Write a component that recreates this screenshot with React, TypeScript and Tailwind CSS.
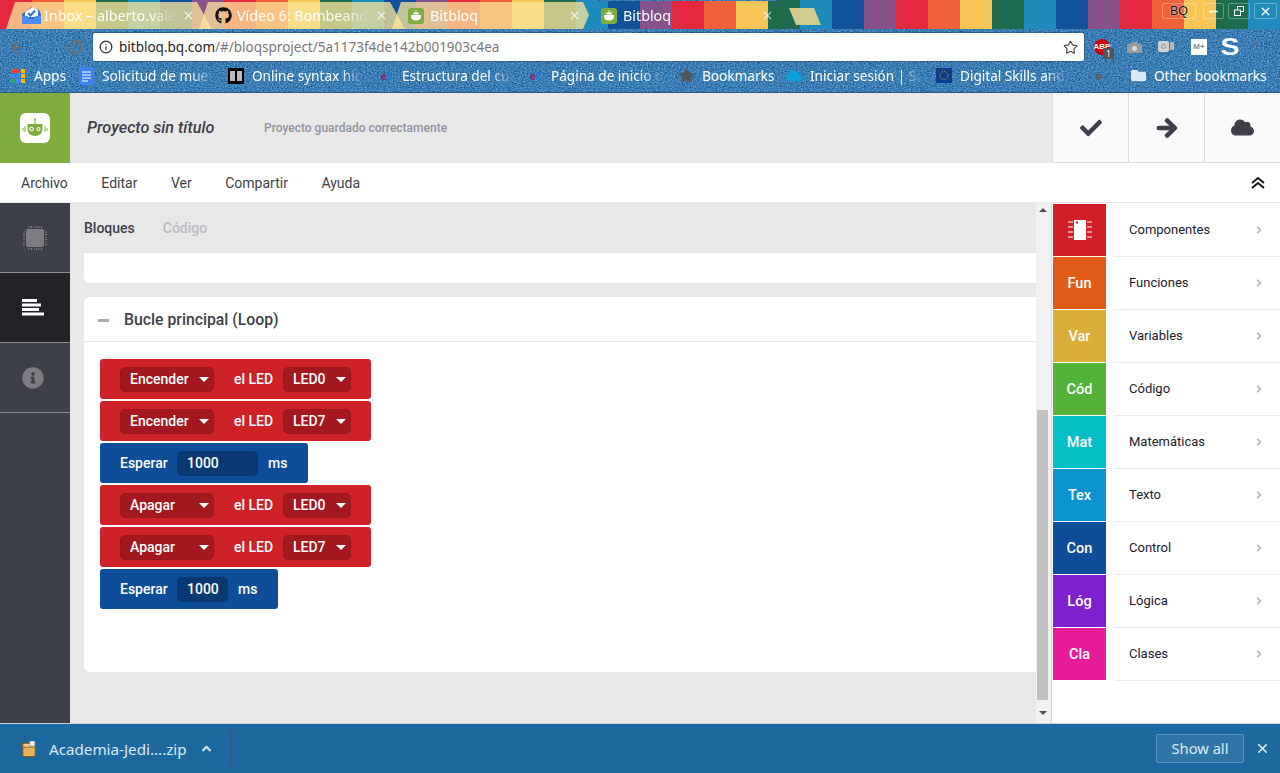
import React from "react";
import { FaCheck, FaArrowRight, FaCloud, FaInfoCircle, FaStar, FaAngleRight, FaGithub, FaAngleUp, FaFolder } from "react-icons/fa";
import { ArrowLeft, ArrowRight, RotateCw, Info, Star, X, Minus } from "lucide-react";

const stripeColors = ["bg-[#e4283f]", "bg-[#f0603a]", "bg-[#f5c656]", "bg-[#1e6b50]", "bg-[#1f8bbd]", "bg-[#11539b]", "bg-[#87518b]"];

function Denim({ id }: { id: string }) {
  return (
    <svg className="absolute inset-0 w-full h-full" aria-hidden="true">
      <filter id={id} x="0" y="0" width="100%" height="100%" colorInterpolationFilters="sRGB">
        <feTurbulence type="fractalNoise" baseFrequency="0.62 0.8" numOctaves={2} seed={4} />
        <feColorMatrix values="0.5 0 0 0 -0.02  0.5 0 0 0 0.24  0.5 0 0 0 0.45  0 0 0 0 1" />
      </filter>
      <rect width="100%" height="100%" filter={`url(#${id})`} />
    </svg>
  );
}

function TabIconBitbloq() {
  return (
    <svg width="16" height="16" viewBox="0 0 16 16" className="shrink-0">
      <rect width="16" height="16" rx="3" fill="#7fac3f" />
      <path d="M3 7h10v1.5c0 2.5-2 4-5 4s-5-1.500-5-4z" fill="#fff" />
      <rect x="5" y="4.500" width="6" height="2" rx="1" fill="#fff" />
      <rect x="7.500" y="2.500" width="1" height="2" fill="#fff" />
    </svg>
  );
}

function InboxIcon() {
  return (
    <svg width="19" height="17" viewBox="0 0 19 17" className="shrink-0">
      <path d="M0 7 L10 0 L17 3 L19 7 V17 H0z" fill="#2f72d6" />
      <path d="M3 5 L11 0 L16 3 V10 H3z" fill="#fff" />
      <path d="M6 6 L8.500 8.500 L13 3.500" stroke="#2f72d6" strokeWidth="2" fill="none" />
      <path d="M0 9 H5.500 L7 12 H12 L13.500 9 H19 V17 H0z" fill="#4a8df0" />
    </svg>
  );
}

function Tab({ label, icon, closeColor = "text-white/70", clip }: any) {
  return (
    <div className={`relative w-[206px] shrink-0 -mr-[13px] h-full ${clip}`}>
      <div className="relative h-full flex items-center pl-[16px] pr-[17px]">
        <span className="w-[19px] flex justify-start shrink-0">{icon}</span>
        <span className="ml-[3px] flex-1 overflow-hidden whitespace-nowrap text-[14.300px] text-white [mask-image:linear-gradient(to_right,#000_78%,transparent)]">{label}</span>
        <X size={13} strokeWidth={2.500} className={`ml-[4px] shrink-0 ${closeColor}`} />
      </div>
    </div>
  );
}

function BookmarkItem({ w, icon, label, fade = false }: { w: string; icon: React.ReactNode; label: string; fade?: boolean }) {
  return (
    <div className={`flex items-center shrink-0 ${w} ${fade ? "pr-[15px]" : ""}`}>
      <span className="w-[16px] flex justify-center shrink-0">{icon}</span>
      <span className={`ml-[8px] overflow-hidden whitespace-nowrap flex-1 ${fade ? "[mask-image:linear-gradient(to_right,#000_80%,transparent)]" : ""}`}>{label}</span>
    </div>
  );
}

function Ex() {
  return <span className="text-[10px] font-bold leading-none tracking-[-1px]"><span className="text-[#8c2a66]">e</span><span className="text-[#1f7fd0]">X</span></span>;
}

function Chrome() {
  const inactive = "[clip-path:polygon(0_100%,9px_0,191px_0,206px_100%)] bg-[#fce599]/75";
  return (
    <div className="relative h-[93px] bg-[#3d7eb3] overflow-hidden font-['Noto_Sans',sans-serif]">
      <Denim id="denim-a" />
      {/* tab strip */}
      <div className="relative h-[29px] [clip-path:polygon(0_0,597px_0,597px_1px,777px_1px,790px_29px,585px_29px,0_29px,0_0,777px_0,1280px_0,1280px_29px,790px_29px,777px_1px,777px_0)]">
        <div className="absolute inset-0 flex">
          {Array.from({ length: 40 }).map((_, i) => (
            <div key={i} className={`w-[32px] shrink-0 h-full ${stripeColors[i % 7]}`} />
          ))}
        </div>
      </div>
      <div className="absolute left-0 top-0 h-[29px] w-full">
        <div className="absolute left-[6px] top-[2px] h-[27px] flex">
          <Tab label="Inbox – alberto.valero" icon={<InboxIcon />} clip={inactive} />
          <Tab label="Vídeo 6: Bombeando" icon={<FaGithub size={17} className="text-[#111]" />} clip={inactive} />
          <Tab label="Bitbloq" icon={<TabIconBitbloq />} clip="[clip-path:polygon(0_100%,9px_0,191px_0,197px_48%,191px_100%)] bg-[#fce599]/75" />
          <Tab label="Bitbloq" icon={<TabIconBitbloq />} closeColor="text-white/60" clip="" />
        </div>
        <div className="absolute left-[789px] top-[8px] w-[32px] h-[17px] bg-[#d0cc8e] [clip-path:polygon(0_0,78%_0,100%_100%,22%_100%)]" />
      </div>
      {/* window controls */}
      <div className="absolute right-[3px] top-[3px] flex gap-[4px] text-white">
        <div className="w-[34px] h-[16px] mr-[3px] rounded-[2px] border border-white/30 flex items-center justify-center text-[12.500px] text-[#111] font-['Liberation_Sans',sans-serif] [text-shadow:0_0_2px_#fff]">BQ</div>
        <div className="w-[21px] h-[16px] rounded-[2px] border border-white/30 flex items-center justify-center"><Minus size={13} strokeWidth={2.500} /></div>
        <div className="w-[22px] h-[16px] rounded-[2px] border border-white/30 flex items-center justify-center">
          <svg width="10" height="10" viewBox="0 0 10 10" fill="none" stroke="#fff"><rect x="3.500" y="0.500" width="6" height="5" /><rect x="0.500" y="4" width="6" height="5.500" fill="#1a6a56" /></svg>
        </div>
        <div className="w-[23px] h-[16px] rounded-[2px] border border-white/30 flex items-center justify-center"><X size={13} strokeWidth={2.500} /></div>
      </div>
      {/* toolbar */}
      <div className="relative h-[33px] pt-[3px] flex items-center">
        <ArrowLeft size={17} strokeWidth={2.200} className="ml-[9px] text-[#6f6a66]" />
        <ArrowRight size={17} strokeWidth={2.200} className="ml-[11px] text-[#5f7f9e]/60" />
        <RotateCw size={16} strokeWidth={2.500} className="ml-[13px] text-[#6f6a66]" />
        <div className="ml-[10px] w-[991px] h-[28px] bg-white rounded-[2px] shadow-[0_0_0_1px_rgba(30,60,90,0.4)] flex items-center pl-[6px] pr-[6px]">
          <Info size={14} strokeWidth={2.200} className="text-[#333]" />
          <span className="ml-[6px] text-[13.500px] whitespace-nowrap text-[#222]">bitbloq.bq.com<span className="text-[#777]">/#/bloqsproject/5a1173f4de142b001903c4ea</span></span>
          <Star size={15} strokeWidth={1.800} className="ml-auto text-[#444]" />
        </div>
        <div className="ml-[9px] w-[18px] flex justify-center relative">
          <div className="w-[16px] h-[16px] rounded-full bg-[#c8000b] text-white text-[8px] font-bold flex items-center justify-center font-['Liberation_Sans',sans-serif]">ABP</div>
          <div className="absolute left-[10px] top-[9px] w-[11px] h-[11px] bg-[#555] text-white text-[8px] flex items-center justify-center rounded-[1px]">1</div>
        </div>
        <svg width="15" height="13" viewBox="0 0 15 13" className="ml-[16px]"><path d="M1 3h3l1-2h5l1 2h3a1 1 0 0 1 1 1v8H0V4a1 1 0 0 1 1-1z" fill="#9a9a9a" /><circle cx="7.500" cy="7.500" r="2.500" fill="#ddd" /></svg>
        <svg width="18" height="14" viewBox="0 0 18 14" className="ml-[15px]"><rect x="1" y="1" width="11" height="11" rx="2" fill="#cfcfcf" /><rect x="13" y="2" width="4" height="8" rx="1" fill="#b8b8b8" /><circle cx="6.500" cy="6.500" r="2" fill="none" stroke="#999" /></svg>
        <div className="ml-[16px] w-[16px] h-[16px] bg-white flex items-center justify-center text-[8px] font-bold text-[#888] font-['Liberation_Sans',sans-serif]">M+</div>
        <div className="ml-[15px] w-[16px] h-[16px] flex items-center justify-center text-[23px] leading-none font-black text-white font-['Liberation_Sans',sans-serif] scale-x-125">S</div>
        <div className="ml-[15px] flex flex-col gap-[2px]">
          <i className="block w-[2px] h-[2px] bg-[#6f6a66]" />
          <i className="block w-[2px] h-[2px] bg-[#6f6a66]" />
          <i className="block w-[2px] h-[2px] bg-[#6f6a66]" />
        </div>
      </div>
      {/* bookmarks */}
      <div className="relative h-[31px] pl-[10px] pb-[2px] flex items-center text-[13.600px] text-white border-b border-[#2b5a85]">
        <BookmarkItem w="w-[68px]" label="Apps" icon={
          <svg width="14" height="14" viewBox="0 0 14 14">
            {["#ea4335", "#ea4335", "#fbbc05", "#4285f4", "#4285f4", "#fbbc05", "#34a853", "#4285f4", "#fbbc05"].map((c, i) => (
              <rect key={i} x={(i % 3) * 5} y={Math.floor(i / 3) * 5} width="4" height="4" fill={c} />
            ))}
          </svg>
        } />
        <BookmarkItem w="w-[150px]" label="Solicitud de muestras" fade icon={
          <svg width="15" height="18" viewBox="0 0 15 18"><rect width="15" height="18" rx="1" fill="#3b82f0" /><path d="M3 5h9M3 8h9M3 11h9M3 14h6" stroke="#fff" /></svg>
        } />
        <BookmarkItem w="w-[150px]" label="Online syntax highlighting" fade icon={
          <svg width="16" height="16" viewBox="0 0 16 16"><rect width="16" height="16" fill="#000" /><rect x="2" y="3" width="5" height="10" fill="#bbb" /><rect x="9" y="3" width="5" height="10" fill="#bbb" /></svg>
        } />
        <BookmarkItem w="w-[149px]" label="Estructura del curso" fade icon={<Ex />} />
        <BookmarkItem w="w-[151px]" label="Página de inicio de" fade icon={<Ex />} />
        <BookmarkItem w="w-[108px]" label="Bookmarks" icon={<FaStar size={15} className="text-[#555]" />} />
        <BookmarkItem w="w-[150px]" label="Iniciar sesión | Salesforce" fade icon={<FaCloud size={17} className="text-[#0d9dda]" />} />
        <BookmarkItem w="w-[146px]" label="Digital Skills and Jobs" fade icon={
          <svg width="16" height="15" viewBox="0 0 16 15"><rect width="16" height="15" fill="#0f3e8c" /><circle cx="8" cy="7.500" r="4" fill="none" stroke="#c9b43a" strokeDasharray="1 1.300" /></svg>
        } />
        <span className="w-[48px] pl-[13px] text-[#6f5a50] font-bold text-[13px]">»</span>
        <BookmarkItem w="w-[140px]" label="Other bookmarks" icon={<FaFolder size={15} className="text-[#dbe9f5]" />} />
      </div>
    </div>
  );
}

function Logo() {
  return (
    <div className="w-[70px] h-full bg-[#7fac3f] flex items-center justify-center shrink-0">
      <div className="w-[30px] h-[30px] bg-white rounded-[6px] flex items-center justify-center">
        <svg width="26" height="20" viewBox="0 0 26 20">
          <rect x="12.500" y="1" width="1" height="5" fill="#7fac3f" />
          <circle cx="13" cy="1.500" r="1" fill="#7fac3f" />
          <path d="M5.500 6h15v5c0 4-3 7-7.500 7s-7.500-3-7.500-7z" fill="#7fac3f" />
          <circle cx="9.500" cy="11" r="2.300" fill="#fff" /><circle cx="9.500" cy="11" r="1.200" fill="#7fac3f" />
          <circle cx="16.500" cy="11" r="2" fill="#fff" /><circle cx="16.500" cy="11" r="1" fill="#7fac3f" />
          <path d="M1 10v3M3 8v6M23 8v6M25 10v3" stroke="#7fac3f" />
        </svg>
      </div>
    </div>
  );
}

function Header() {
  const btn = "w-[76px] h-full bg-[#fafafa] border-l border-[#dcdcdc] flex items-center justify-center text-[#3d4049]";
  return (
    <div className="h-[70px] flex bg-[#e8e8e8] font-['Roboto',sans-serif]">
      <Logo />
      <div className="flex-1 flex items-center pl-[17px]">
        <span className="text-[16.200px] italic font-medium text-[#3d4049] w-[177px] whitespace-nowrap">Proyecto sin título</span>
        <span className="text-[12px] font-medium text-[#92959f] whitespace-nowrap">Proyecto guardado correctamente</span>
      </div>
      <div className="flex border-b border-[#dcdcdc]">
        <div className={btn}><FaCheck size={22} /></div>
        <div className={btn}><FaArrowRight size={22} stroke="currentColor" strokeWidth={30} /></div>
        <div className={btn}><FaCloud size={23} /></div>
      </div>
    </div>
  );
}

function MenuBar() {
  return (
    <div className="h-[40px] pt-[1px] bg-white border-b border-[#e8e8e8] flex items-center pl-[21px] pr-[15px] gap-[33.500px] text-[14px] text-[#3d4049] font-['Roboto',sans-serif]">
      <span>Archivo</span>
      <span>Editar</span>
      <span>Ver</span>
      <span>Compartir</span>
      <span>Ayuda</span>
      <svg width="14" height="12" viewBox="0 0 14 12" fill="none" stroke="#111" strokeWidth="1.800" className="ml-auto">
        <path d="M1 6l6-5 6 5M1 11l6-5 6 5" />
      </svg>
    </div>
  );
}

function Sidebar() {
  return (
    <div className="w-[70px] shrink-0 bg-[#3d4049] flex flex-col">
      <div className="h-[70px] border-b border-[#8b8d92] flex items-center justify-center pr-[1px]">
        <svg width="24" height="24" viewBox="0 0 24 24">
          <rect x="3" y="3" width="18" height="18" rx="2" fill="#7b7d83" />
          <path d="M6 0v2M8.500 0v2M11 0v2M13.500 0v2M16 0v2M18.500 0v2M6 22v2M8.500 22v2M11 22v2M13.500 22v2M16 22v2M18.500 22v2M0 6h2M0 8.500h2M0 11h2M0 13.500h2M0 16h2M0 18.500h2M22 6h2M22 8.500h2M22 11h2M22 13.500h2M22 16h2M22 18.500h2" stroke="#7b7d83" />
        </svg>
      </div>
      <div className="h-[70px] bg-[#222326] border-b border-[#8b8d92] flex items-center justify-center pr-[4px]">
        <svg width="22" height="17" viewBox="0 0 22 17" fill="#fff">
          <rect width="15" height="3" />
          <rect y="4.500" width="19" height="3" />
          <rect y="9" width="17" height="3" />
          <rect y="13.500" width="22" height="3" />
        </svg>
      </div>
      <div className="h-[70px] border-b border-[#8b8d92] flex items-center justify-center pr-[4px]">
        <FaInfoCircle size={22} className="text-[#7b7d83]" />
      </div>
    </div>
  );
}

function Drop({ w, label }: { w: string; label: string }) {
  return (
    <div className={`${w} h-[25px] bg-[#a3171e] border border-[#9a171d] rounded-[5px] flex items-center pl-[9px] pr-[4px]`}>
      <span className="flex-1">{label}</span>
      <svg width="10" height="5" viewBox="0 0 10 5"><path d="M0 0h10L5 5z" fill="#fff" /></svg>
    </div>
  );
}

function LedBlock({ action, led }: { action: string; led: string }) {
  return (
    <div className="w-[271px] h-[40px] bg-[#cf2128] rounded-[3px] flex items-center pl-[20px]">
      <Drop w="w-[94px]" label={action} />
      <span className="ml-[20px] w-[49px]">el LED</span>
      <Drop w="w-[68px]" label={led} />
    </div>
  );
}

function WaitBlock({ outer, input }: { outer: string; input: string }) {
  return (
    <div className={`${outer} h-[40px] bg-[#0e4d98] rounded-[3px] flex items-center pl-[20px]`}>
      <span className="w-[57px]">Esperar</span>
      <div className={`${input} h-[25px] bg-[#0a3873] rounded-[5px] pl-[10px] flex items-center`}>1000</div>
      <span className="ml-[10px]">ms</span>
    </div>
  );
}

function Center() {
  return (
    <div className="flex-1 min-w-0 bg-[#e8e8e8] pl-[14px] flex flex-col font-['Roboto',sans-serif]">
      <div className="h-[50px] flex items-center gap-[28px] text-[14px] font-medium">
        <span className="text-[#3d4049]">Bloques</span>
        <span className="text-[#b9bcc1]">Código</span>
      </div>
      <div className="h-[30px] bg-white rounded-bl-[6px]" />
      <div className="mt-[14px] h-[375px] bg-white rounded-l-[6px] flex flex-col">
        <div className="h-[45px] pt-[2px] border-b border-[#e8e8e8] flex items-center pl-[14px] shrink-0">
          <span className="w-[11px] h-[3px] bg-[#a8adb5]" />
          <span className="ml-[15px] text-[15.800px] font-medium text-[#3d4049]">Bucle principal (Loop)</span>
        </div>
        <div className="pl-[16px] pt-[17px] flex flex-col gap-[2px] text-[14px] font-medium text-white">
          <LedBlock action="Encender" led="LED0" />
          <LedBlock action="Encender" led="LED7" />
          <WaitBlock outer="w-[208px]" input="w-[81px]" />
          <LedBlock action="Apagar" led="LED0" />
          <LedBlock action="Apagar" led="LED7" />
          <WaitBlock outer="w-[178px]" input="w-[51px]" />
        </div>
      </div>
    </div>
  );
}

function Scrollbar() {
  return (
    <div className="w-[16px] shrink-0 bg-[#f1f1f1] border-r border-[#d9d9d9] flex flex-col items-center pr-[3px] pl-[1px]">
      <svg width="8" height="4" viewBox="0 0 8 4" className="mt-[5px] shrink-0"><path d="M4 0l4 4H0z" fill="#505050" /></svg>
      <div className="w-[11px] h-[290px] bg-[#c1c1c1] mt-[198px] shrink-0" />
      <svg width="8" height="4" viewBox="0 0 8 4" className="mt-[11px] shrink-0"><path d="M4 4L8 0H0z" fill="#505050" /></svg>
    </div>
  );
}

const rows = [
  ["", "Componentes", "bg-[#d01f27]"],
  ["Fun", "Funciones", "bg-[#e05a18]"],
  ["Var", "Variables", "bg-[#dbae3a]"],
  ["Cód", "Código", "bg-[#54b23a]"],
  ["Mat", "Matemáticas", "bg-[#06c0c8]"],
  ["Tex", "Texto", "bg-[#0a93cf]"],
  ["Con", "Control", "bg-[#0e4d98]"],
  ["Lóg", "Lógica", "bg-[#7f20cf]"],
  ["Cla", "Clases", "bg-[#e81c98]"],
];

function ChipIcon() {
  return (
    <svg width="24" height="20" viewBox="0 0 24 20">
      <rect x="6" y="0" width="12" height="20" fill="#fff" />
      <rect x="8" y="1.500" width="2" height="2" fill="#d01f27" />
      <path d="M0 2h5M0 7h5M0 12h5M0 17h5M19 2h5M19 7h5M19 12h5M19 17h5" stroke="#fff" strokeWidth="1.200" />
    </svg>
  );
}

function RightPanel() {
  return (
    <div className="w-[228px] shrink-0 bg-white pl-[1px] pt-[1px] flex flex-col gap-[1px] font-['Roboto',sans-serif]">
      {rows.map(([abbr, name, color]) => (
        <div key={name} className="h-[52px] flex items-stretch">
          <div className={`w-[53px] ${color} flex items-center justify-center text-[14.500px] font-medium text-white shrink-0 ${abbr ? "pt-[1px]" : ""}`}>
            {abbr || <ChipIcon />}
          </div>
          <div className="relative flex-1 ml-[8px] flex items-center pl-[15px] pr-[15px] text-[13px] text-[#1a2030] shadow-[0_1px_0_#e8eaec]">
            <span className="flex-1">{name}</span>
            <FaAngleRight size={12} className="text-[#b9bcc6]" />
          </div>
        </div>
      ))}
    </div>
  );
}

function DownloadBar() {
  return (
    <div className="h-[50px] bg-[#1d689f] border-t border-[#c9d3da] flex items-center pl-[22px] pr-[10px] font-['Noto_Sans',sans-serif] text-[#dcecf7] text-[15.200px]">
      <svg width="14" height="16" viewBox="0 0 14 17" className="shrink-0">
        <rect x="0.500" y="2.500" width="13" height="14" fill="#e6b35c" stroke="#8a5a1c" />
        <rect x="0.500" y="2.500" width="13" height="4" fill="#f3d38f" stroke="#8a5a1c" />
        <path d="M8 0h5v5H8z" fill="#fff" stroke="#aaa" />
      </svg>
      <span className="ml-[13px] mt-[2px] whitespace-nowrap">Academia-Jedi....zip</span>
      <FaAngleUp size={15} className="ml-[12px] text-[#c7dbea]" />
      <span className="ml-[16px] w-px h-[36px] bg-[#2a5478]" />
      <div className="ml-auto w-[88px] h-[29px] rounded-[2px] border border-[#5b97c0] bg-[#2f75a8] flex items-center justify-center text-[14.700px]">Show all</div>
      <X size={15} strokeWidth={2.500} className="ml-[11px] text-[#dcecf7]" />
    </div>
  );
}

export default function App() {
  return (
    <div className="w-[1280px] h-[773px] overflow-hidden flex flex-col bg-white">
      <Chrome />
      <Header />
      <MenuBar />
      <div className="h-[520px] flex shrink-0 overflow-hidden">
        <Sidebar />
        <Center />
        <Scrollbar />
        <RightPanel />
      </div>
      <DownloadBar />
    </div>
  );
}
